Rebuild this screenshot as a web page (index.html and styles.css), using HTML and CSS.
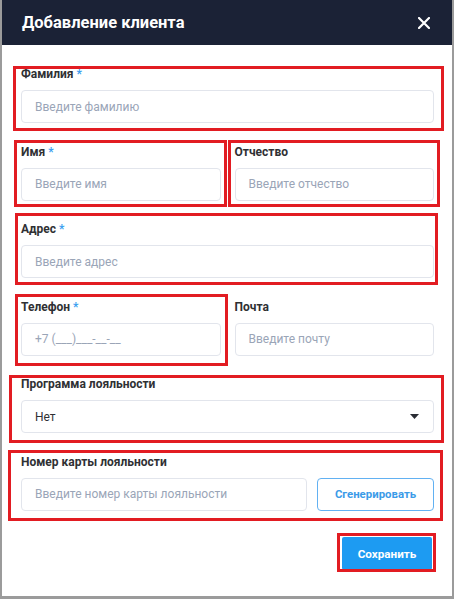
FILE: index.html
```html
<!DOCTYPE html>
<html lang="ru">
<head>
<meta charset="utf-8">
<title>Добавление клиента</title>
<link rel="stylesheet" href="styles.css">
</head>
<body>
<div class="modal">
  <header class="modal-header">
    <h1 class="modal-title">Добавление клиента</h1>
    <button class="close-btn" aria-label="Закрыть">
      <svg width="12" height="12" viewBox="0 0 12 12"><path d="M1 1L11 11M11 1L1 11" stroke="#fff" stroke-width="2.2" stroke-linecap="round"/></svg>
    </button>
  </header>
  <div class="modal-body">
    <div class="field">
      <label class="label">Фамилия <span class="req">*</span></label>
      <div class="input placeholder">Введите фамилию</div>
    </div>
    <div class="row">
      <div class="field">
        <label class="label">Имя <span class="req">*</span></label>
        <div class="input placeholder">Введите имя</div>
      </div>
      <div class="field">
        <label class="label">Отчество</label>
        <div class="input placeholder">Введите отчество</div>
      </div>
    </div>
    <div class="field">
      <label class="label">Адрес <span class="req">*</span></label>
      <div class="input placeholder">Введите адрес</div>
    </div>
    <div class="row">
      <div class="field">
        <label class="label">Телефон <span class="req">*</span></label>
        <div class="input placeholder">+7 (___)___-__-__</div>
      </div>
      <div class="field">
        <label class="label">Почта</label>
        <div class="input placeholder">Введите почту</div>
      </div>
    </div>
    <div class="field">
      <label class="label">Программа лояльности</label>
      <div class="input select">
        <span>Нет</span>
        <svg class="caret" width="9" height="5" viewBox="0 0 9 5"><path d="M0 0H9L4.5 5Z" fill="#2a2d34"/></svg>
      </div>
    </div>
    <div class="field">
      <label class="label">Номер карты лояльности</label>
      <div class="card-row">
        <div class="input placeholder">Введите номер карты лояльности</div>
        <button class="btn-outline">Сгенерировать</button>
      </div>
    </div>
    <div class="footer">
      <button class="btn-primary">Сохранить</button>
    </div>
  </div>

  <div class="mark m1"></div>
  <div class="mark m2"></div>
  <div class="mark m3"></div>
  <div class="mark m4"></div>
  <div class="mark m5"></div>
  <div class="mark m6"></div>
  <div class="mark m7"></div>
  <div class="mark m8"></div>
</div>
</body>
</html>
```

FILE: styles.css
```css
* { box-sizing: border-box; }
html, body { margin: 0; padding: 0; }
body {
  background: #9b9b9b;
  font-family: Roboto, "Liberation Sans", Arial, sans-serif;
  width: 454px;
  height: 599px;
  overflow: hidden;
}
.modal {
  position: relative;
  margin-left: 2px;
  width: 450px;
  height: 596px;
  background: #fff;
}
.modal-header {
  height: 45px;
  background: #1b2236;
  display: flex;
  align-items: center;
  justify-content: space-between;
  padding: 0 22px 0 20px;
}
.modal-title {
  margin: 0;
  color: #fff;
  font-size: 16.5px;
  font-weight: 700;
}
.close-btn {
  background: none;
  border: 0;
  padding: 0;
  width: 12px;
  height: 12px;
  display: flex;
}
.modal-body {
  padding: 21px 18px 0 19px;
  display: flex;
  flex-direction: column;
  gap: 20.5px;
}
.field {
  display: flex;
  flex-direction: column;
  gap: 8px;
  min-width: 0;
}
.label {
  font-size: 12px;
  line-height: 16px;
  font-weight: 700;
  color: #2f3033;
}
.req { color: #3c9ff0; }
.row {
  display: grid;
  grid-template-columns: 1fr 1fr;
  gap: 14px;
}
.input {
  height: 33px;
  border: 1px solid #e2e5ec;
  border-radius: 4px;
  padding: 0 13px;
  display: flex;
  align-items: center;
  font-size: 12px;
  color: #2f3033;
}
.placeholder { color: #9aa5b7; }
.select { justify-content: space-between; padding-right: 14px; }
.caret { display: block; }
.card-row {
  display: grid;
  grid-template-columns: 1fr 117px;
  gap: 10px;
}
.btn-outline {
  height: 33px;
  background: #fff;
  border: 1px solid #62b1f2;
  border-radius: 4px;
  color: #3b9be8;
  font-family: inherit;
  font-size: 11.4px;
  font-weight: 700;
}
.footer {
  display: flex;
  justify-content: flex-end;
  padding-top: 6px;
  padding-right: 2px;
}
.btn-primary {
  width: 90px;
  height: 33px;
  background: #1d9bf2;
  border: 0;
  border-radius: 2px;
  color: #fff;
  font-family: inherit;
  font-size: 11.7px;
  font-weight: 700;
}

/* annotation overlays */
.mark {
  position: absolute;
  border: 3px solid #e21c22;
  pointer-events: none;
}
.m1 { left: 11px; top: 66px; width: 431px; height: 65px; }
.m2 { left: 12px; top: 140px; width: 213px; height: 67px; }
.m3 { left: 226px; top: 140px; width: 212px; height: 67px; }
.m4 { left: 13px; top: 213px; width: 423px; height: 72px; }
.m5 { left: 13px; top: 294px; width: 213px; height: 72px; }
.m6 { left: 7px; top: 375px; width: 435px; height: 68px; }
.m7 { left: 6px; top: 450px; width: 435px; height: 71px; }
.m8 { left: 335px; top: 533px; width: 99px; height: 39px; }
```
